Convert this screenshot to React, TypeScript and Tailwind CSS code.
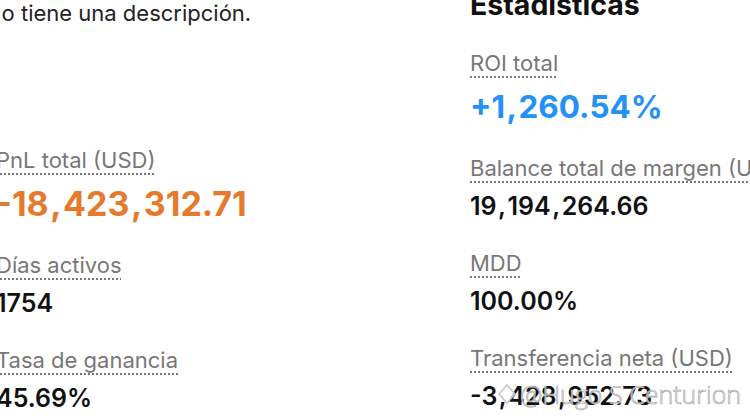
import React from 'react';

type Stat = {
  label: string;
  value: string;
  tone?: 'up' | 'down';
};

const leftStats: Stat[] = [
  { label: 'PnL total (USD)', value: '-18,423,312.71', tone: 'down' },
  { label: 'Días activos', value: '1754' },
  { label: 'Tasa de ganancia', value: '45.69%' },
];

const rightStats: Stat[] = [
  { label: 'ROI total', value: '+1,260.54%', tone: 'up' },
  { label: 'Balance total de margen (USD)', value: '19,194,264.66' },
  { label: 'MDD', value: '100.00%' },
  { label: 'Transferencia neta (USD)', value: '-3,428,952.73' },
];

// the original font has wide commas, so give them a bit of room
const Amount = ({ text }: { text: string }) => (
  <>
    {text.split(',').map((part, i) => (
      <React.Fragment key={i}>
        {i > 0 && <span className="mx-[1.5px]">,</span>}
        {part}
      </React.Fragment>
    ))}
  </>
);

const StatItem = ({ stat }: { stat: Stat }) => {
  const big = stat.tone !== undefined;
  return (
    <div className="mb-[27px]">
      <div className="whitespace-nowrap">
        <span className="text-[22px] leading-[28px] text-[#777777] underline decoration-dotted decoration-[#777777] decoration-2 underline-offset-[5px]">
          {stat.label}
        </span>
      </div>
      {big ? (
        <div
          className={
            'mt-[10px] leading-[40px] font-bold whitespace-nowrap ' +
            (stat.tone === 'up' ? 'text-[31.5px] text-[#2391f5]' : 'text-[34px] text-[#e5792c]')
          }
        >
          <Amount text={stat.value} />
        </div>
      ) : (
        <div className="mt-[8px] text-[25px] leading-[32px] font-semibold text-[#111111] whitespace-nowrap">
          <Amount text={stat.value} />
        </div>
      )}
    </div>
  );
};

export default function App() {
  return (
    <div className="relative w-[750px] h-[420px] overflow-hidden bg-white font-['Inter','Liberation_Sans',sans-serif]">
      <div className="-ml-1 flex items-start -mt-[11px]">
        <div className="w-[474px] shrink-0 pt-[10px]">
          <p className="-ml-[11px] text-[22px] leading-[28px] text-[#222222] mb-[119px] whitespace-nowrap">
            No tiene una descripción.
          </p>
          {leftStats.map((s) => (
            <StatItem key={s.label} stat={s} />
          ))}
        </div>
        <div className="flex-1 min-w-0">
          <h2 className="text-[28.5px] leading-[32px] font-bold text-[#111111] mb-[28px]">Estadísticas</h2>
          {rightStats.map((s) => (
            <StatItem key={s.label} stat={s} />
          ))}
        </div>
      </div>

      {/* watermark */}
      <div className="absolute left-[496px] top-[379px] flex items-center gap-[2px] pointer-events-none select-none">
        <svg width="22" height="24" viewBox="0 0 22 24" fill="none">
          <path d="M11 3 L19 12 L11 21 L3 12 Z" stroke="#c4c4c4" strokeWidth="1.5" fill="#ffffff" fillOpacity="0.7" />
        </svg>
        <span className="text-[25px] leading-[30px] font-light text-white/80 [-webkit-text-stroke:0.7px_#a8a8a8] font-['Open_Sans',sans-serif]">
          @Hugo S Centurion
        </span>
      </div>
    </div>
  );
}
